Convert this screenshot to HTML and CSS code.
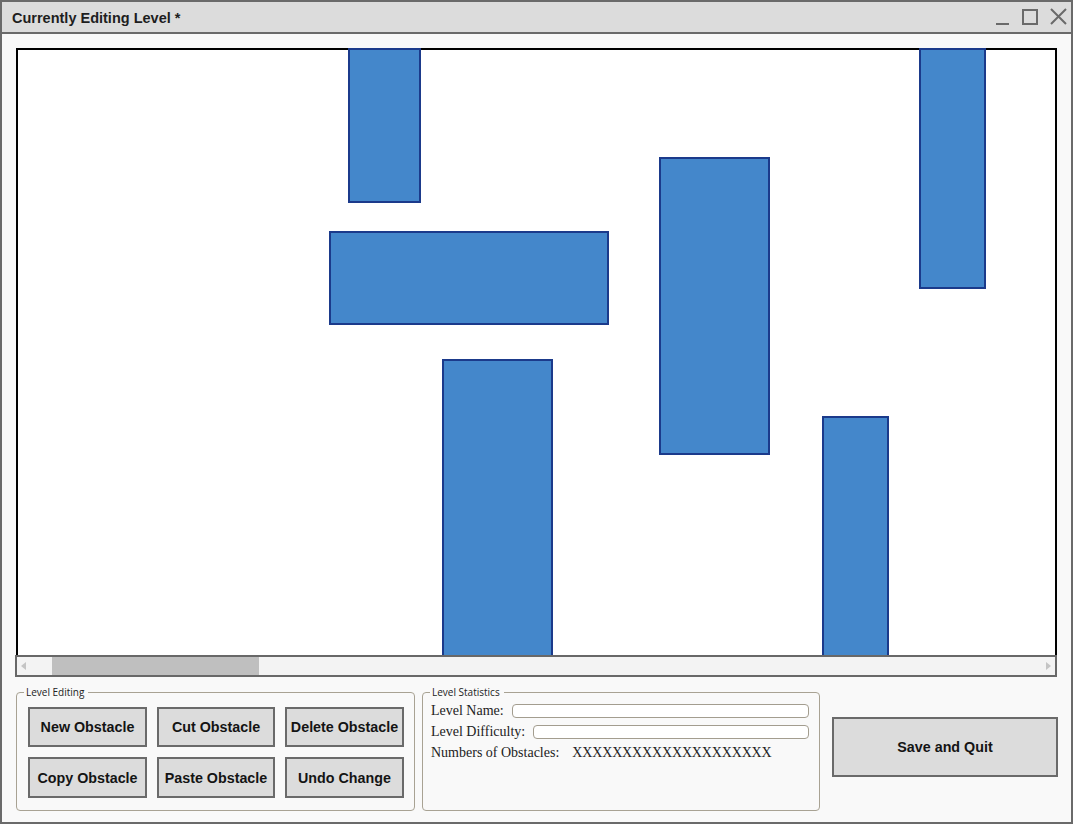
FILE: index.html
```html
<!DOCTYPE html>
<html>
<head>
<meta charset="utf-8">
<title>Currently Editing Level</title>
<link rel="stylesheet" href="styles.css">
</head>
<body>
<div class="window">
  <div class="titlebar">
    <span class="title">Currently Editing Level *</span>
    <svg class="controls" width="76" height="30" viewBox="0 0 76 30">
      <rect x="2" y="21" width="13" height="2" fill="#6a6a6a"/>
      <rect x="29" y="8" width="14" height="14" fill="none" stroke="#6a6a6a" stroke-width="2"/>
      <path d="M57 7 L72 22 M72 7 L57 22" stroke="#6a6a6a" stroke-width="2" fill="none"/>
    </svg>
  </div>
  <div class="content">
    <div class="viewport">
      <div class="canvas">
        <div class="obstacle" style="left:330px;top:-2px;width:73px;height:155px"></div>
        <div class="obstacle" style="left:311px;top:181px;width:280px;height:94px"></div>
        <div class="obstacle" style="left:424px;top:309px;width:111px;height:299px"></div>
        <div class="obstacle" style="left:641px;top:107px;width:111px;height:298px"></div>
        <div class="obstacle" style="left:901px;top:-2px;width:67px;height:241px"></div>
        <div class="obstacle" style="left:804px;top:366px;width:67px;height:242px"></div>
      </div>
      <div class="hscroll">
        <span class="arrow arrow-left"></span>
        <div class="thumb"></div>
        <div class="track-rest"></div>
        <span class="arrow arrow-right"></span>
      </div>
    </div>
    <div class="bottom">
      <div class="group editing">
        <span class="legend">Level Editing</span>
        <div class="btn-grid">
          <button class="btn">New Obstacle</button>
          <button class="btn">Cut Obstacle</button>
          <button class="btn">Delete Obstacle</button>
          <button class="btn">Copy Obstacle</button>
          <button class="btn">Paste Obstacle</button>
          <button class="btn">Undo Change</button>
        </div>
      </div>
      <div class="group stats">
        <span class="legend">Level Statistics</span>
        <div class="stat-row">
          <label class="stat-label">Level Name:</label>
          <input class="stat-input" type="text">
        </div>
        <div class="stat-row">
          <label class="stat-label">Level Difficulty:</label>
          <input class="stat-input" type="text">
        </div>
        <div class="stat-row">
          <span class="stat-label">Numbers of Obstacles:</span>
          <span class="stat-value">XXXXXXXXXXXXXXXXXXXX</span>
        </div>
      </div>
      <button class="btn save">Save and Quit</button>
    </div>
  </div>
</div>
</body>
</html>
```

FILE: styles.css
```css
* { box-sizing: border-box; }

html, body {
  margin: 0;
  padding: 0;
  background: #f9f9f9;
}

.window {
  width: 1073px;
  height: 824px;
  border: 2px solid #6a6a6a;
  background: #f9f9f9;
  display: flex;
  flex-direction: column;
  overflow: hidden;
}

.titlebar {
  height: 32px;
  flex: none;
  background: #dcdcdc;
  border-bottom: 2px solid #6a6a6a;
  display: flex;
  align-items: center;
  justify-content: space-between;
  padding-left: 10px;
  padding-right: 1px;
}

.title {
  font-family: "Liberation Sans", Arial, sans-serif;
  font-weight: bold;
  font-size: 14.5px;
  line-height: 30px;
  padding-top: 2px;
  color: #1e1e1e;
}

.controls {
  display: block;
  align-self: flex-start;
}

.content {
  flex: 1;
  padding: 14px 0 0 13px;
}

.viewport {
  width: 1042px;
}

.canvas {
  position: relative;
  margin-left: 1px;
  width: 1041px;
  height: 607px;
  background: #ffffff;
  border: 2px solid #000000;
  border-bottom: none;
}

.obstacle {
  position: absolute;
  background: #4487cb;
  border: 2px solid #1b3a8b;
}

.hscroll {
  position: relative;
  height: 22px;
  border: 2px solid #686868;
  background: #f3f3f3;
  display: flex;
  align-items: center;
}

.arrow {
  width: 0;
  height: 0;
  border-top: 4.5px solid transparent;
  border-bottom: 4.5px solid transparent;
  flex: none;
}

.arrow-left {
  margin-left: 4px;
  border-right: 5px solid #c4c4c4;
}

.arrow-right {
  margin-right: 4px;
  border-left: 5px solid #c4c4c4;
}

.thumb {
  align-self: stretch;
  margin-left: 26px;
  width: 207px;
  background: #bfbfbf;
  flex: none;
}

.track-rest {
  flex: 1;
}

.bottom {
  display: flex;
  align-items: flex-start;
  margin-top: 15px;
  margin-left: 1px;
}

.bottom > * {
  flex: none;
}

.group {
  position: relative;
  border: 1px solid #a8a293;
  border-radius: 4px;
  height: 119px;
}

.legend {
  position: absolute;
  top: -8px;
  left: 7px;
  padding: 0 4px 0 2px;
  background: #f9f9f9;
  font-family: "Open Sans", "Noto Sans", sans-serif;
  font-size: 10px;
  line-height: 14px;
  color: #222222;
}

.editing {
  width: 399px;
  padding: 14px 0 0 11px;
}

.btn-grid {
  display: grid;
  grid-template-columns: 119px 118px 119px;
  grid-template-rows: 40px 41px;
  column-gap: 10px;
  row-gap: 10px;
}

.btn {
  margin: 0;
  padding: 0;
  border: 2px solid #6a6a6a;
  border-radius: 0;
  background: #dcdcdc;
  font-family: "Liberation Sans", Arial, sans-serif;
  font-weight: bold;
  font-size: 14.3px;
  color: #141414;
  white-space: nowrap;
  cursor: default;
}

.stats {
  width: 398px;
  margin-left: 7px;
  padding: 7px 10px 0 8px;
}

.stat-row {
  display: flex;
  align-items: center;
  height: 21px;
  font-family: "Liberation Serif", "Times New Roman", serif;
  font-size: 14px;
  line-height: 21px;
  color: #222222;
}

.stat-label {
  flex: none;
}

.stat-input {
  flex: 1;
  min-width: 0;
  height: 14px;
  margin: 0 0 0 8px;
  padding: 0;
  border: 1px solid #a39d8f;
  border-radius: 4px;
  background: #ffffff;
  outline: none;
}

.stat-value {
  margin-left: 13px;
  letter-spacing: -0.15px;
}

.save {
  width: 226px;
  height: 60px;
  margin-left: 12px;
  margin-top: 25px;
}
```
